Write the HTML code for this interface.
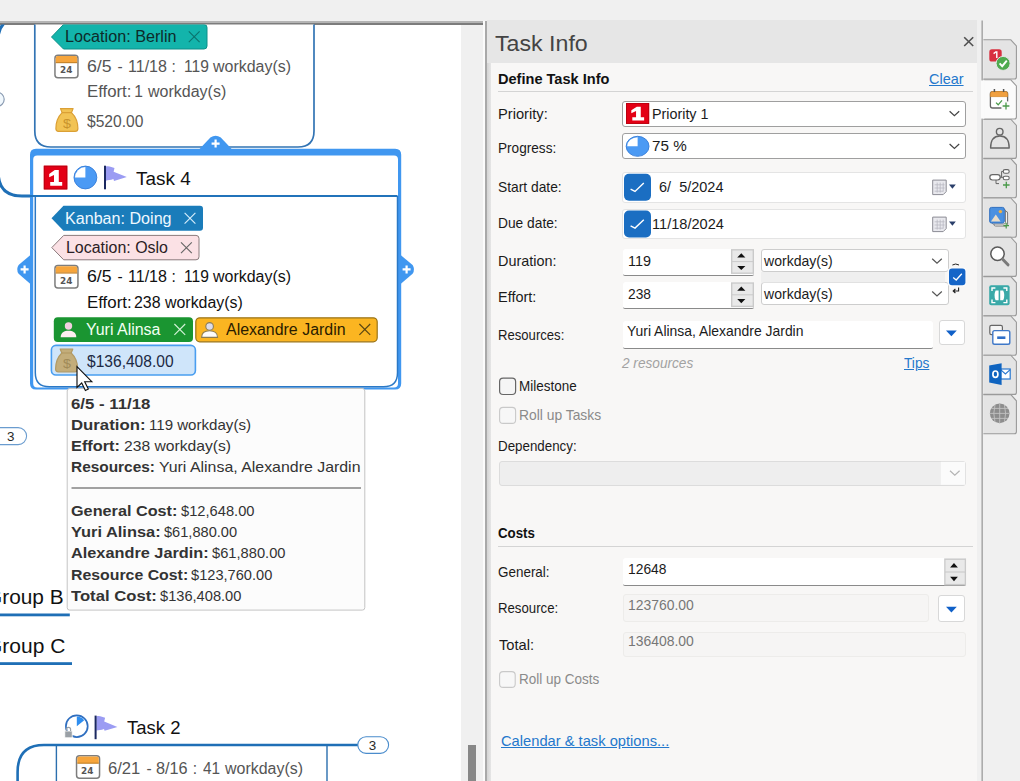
<!DOCTYPE html>
<html lang="en"><head><meta charset="utf-8"><title>Task Info</title>
<style>
html,body{margin:0;padding:0}
body{width:1020px;height:781px;overflow:hidden;position:relative;background:#f0f0f0;font-family:"Liberation Sans",sans-serif}
div{position:absolute;box-sizing:border-box}
#shapes{position:absolute;left:0;top:0}
#labels{left:0;top:0;width:1020px;height:781px}
.t{position:absolute;transform-origin:0 50%;white-space:pre;font-family:"Liberation Sans",sans-serif}
#canvas{left:0;top:24px;width:461px;height:757px;background:#fff}
#canvastop{left:0;top:21px;width:483px;height:3.5px;background:linear-gradient(#b4b4b4 0,#b4b4b4 40%,#7c7c7c 40%,#7c7c7c 100%)}
#vtrack{left:461px;top:24.5px;width:22px;height:757px;background:#f0f0f0}
#vthumb{left:467.6px;top:745.4px;width:8.9px;height:40px;background:#888}
#split1{left:482.5px;top:21px;width:2.7px;height:760px;background:#fbfbfb}
#split2{left:485.1px;top:21px;width:1.5px;height:760px;background:#a9a9a9}
#lborder{left:486.6px;top:62.5px;width:4.7px;height:719px;background:linear-gradient(90deg,#d4d4d4,#e6e6e6)}
#panel{left:486.5px;top:20px;width:490.5px;height:761px;background:#e6e6e6}
#panelbody{left:491.3px;top:62.5px;width:490.2px;height:719px;background:#f8f7f6}
#tabstrip{left:977px;top:20px;width:43px;height:761px;background:#f0f0f0}
.combo{background:#fff;border:1px solid #9f9f9f;border-radius:3px}
.field{background:#fff;border:1px solid #e4e4e4;border-radius:3px}
.wcombo{background:#fff;border:1px solid #cdcdcd;border-radius:3px}
.input{background:#fff;border-bottom:1.5px solid #8a8a8a;border-radius:3px 3px 2px 2px}
.dis{background:#f6f5f4;border:1px solid #edecea;border-radius:3px}
.btn{background:#fff;border:1px solid #d8d8d8;border-radius:3px}
.sep{height:1px;background:#d4d4d4}

</style></head>
<body>
<div id="canvas"></div>
<div id="vtrack"></div><div id="vthumb"></div>
<div id="canvastop"></div>
<div id="split1"></div><div id="split2"></div>
<div id="panel"></div>
<div id="panelbody"></div>
<div id="lborder"></div>
<div id="tabstrip"></div>
<div class="sep" style="left:498px;top:91.4px;width:475px"></div>
<div class="combo" style="left:622px;top:101px;width:344px;height:25.5px"></div>
<div class="combo" style="left:622px;top:133px;width:344px;height:25.5px"></div>
<div class="field" style="left:622px;top:172px;width:344px;height:30.5px"></div>
<div class="field" style="left:622px;top:209px;width:344px;height:30px"></div>
<div class="input" style="left:622.5px;top:249.2px;width:131px;height:26.6px"></div>
<div class="input" style="left:622.5px;top:282px;width:131px;height:26.8px"></div>
<div class="wcombo" style="left:761px;top:249.4px;width:187.5px;height:23px"></div>
<div class="wcombo" style="left:761px;top:282.4px;width:187.5px;height:22.4px"></div>
<div class="input" style="left:622.5px;top:320.8px;width:310px;height:28px"></div>
<div class="btn" style="left:938.6px;top:319.8px;width:26.4px;height:25.4px"></div>
<div class="dis" style="left:499px;top:460.6px;width:467px;height:25.4px;background:#eeeeee;border-color:#dcdcdc"></div>
<div class="sep" style="left:498px;top:545.6px;width:475px"></div>
<div class="input" style="left:622.5px;top:558px;width:343.5px;height:28.4px"></div>
<div class="dis" style="left:622.5px;top:594px;width:306.5px;height:27.6px"></div>
<div class="btn" style="left:938.4px;top:595px;width:26.6px;height:26.6px"></div>
<div class="dis" style="left:622.5px;top:631.6px;width:343.5px;height:25.4px"></div>

<svg id="shapes" width="1020" height="781" viewBox="0 0 1020 781">
<defs>
  <clipPath id="cv"><rect x="0" y="24.5" width="461" height="757"/></clipPath>
  <g id="cal">
    <rect x="0.75" y="0.75" width="23" height="22.5" rx="3" fill="#fff" stroke="#7d7d7d" stroke-width="1.5"/>
    <path d="M1.5 3.5 Q1.5 1.5 3.5 1.5 H21 Q23 1.5 23 3.5 V8 H1.5 Z" fill="#f6a53c"/>
    <rect x="1.5" y="7.6" width="21.5" height="1.2" fill="#c8852a"/>
  </g>
  <g id="bag">
    <path d="M5 0.6 H17.6 L16 4.6 C19.5 8 22.4 14 22.4 20.5 Q22.4 23.4 19.5 23.4 H3 Q0.4 23.4 0.4 20.5 C0.4 14 3.2 8 6.6 4.6 Z" stroke-width="1.2" stroke-linejoin="round"/>
    <path d="M6.3 4.6 H16.3" stroke-width="1.2" fill="none"/>
  </g>
  <g id="xmark"><path d="M0 0 L10.8 10.8 M10.8 0 L0 10.8" fill="none" stroke-width="1.15"/></g>
  <g id="person">
    <circle cx="7.8" cy="4" r="3.7" fill="#f1cfe0"/>
    <path d="M0 15.2 C0 10.6 3.6 8.8 7.8 8.8 C12 8.8 15.6 10.6 15.6 15.2 Z"/>
  </g>
  <g id="flag">
    <path d="M1.8 0.8 C5 -0.2 8 1.6 10.5 2.2 L9.6 6 L22.8 11.4 L10 15.2 L9.4 13.4 C6.5 14.6 4 14.4 1.8 15 Z" fill="#9b9cf3"/>
    <rect x="0" y="0" width="2" height="23.6" fill="#1b2960"/>
  </g>
  <g id="pie">
    <circle cx="12" cy="12" r="11.4" fill="#4b9af4" stroke="#3b82dc" stroke-width="1"/>
    <path d="M12 12 V1.6 A10.4 10.4 0 0 0 1.6 12 Z" fill="#fff"/>
  </g>
  <g id="prio">
    <rect x="0" y="0" width="23.5" height="23.7" fill="#e30016"/>
    <rect x="0.5" y="0.5" width="22.5" height="22.7" fill="none" stroke="#b90010" stroke-width="1"/>
    <path d="M5.4 8.2 L11 4.3 H15 V16.2 H18.4 V20 H6.4 V16.2 H10.2 V9.2 L5.4 11.6 Z" fill="#fff"/>
  </g>
  <g id="plus"><path d="M-4 0 H4 M0 -4 V4" stroke="#fff" stroke-width="2.2" fill="none"/></g>
</defs>
<g clip-path="url(#cv)">
  <!-- parent connector bracket at far left -->
  <path d="M6 21 C2.4 24.4 -1.8 29 -1.8 38 V172 Q-1.6 196 22 196 H31" fill="none" stroke="#1f6fb6" stroke-width="3"/>
  <circle cx="-2.8" cy="99.3" r="7" fill="#f1f8fd" stroke="#8a9bb2" stroke-width="1.2"/>
  <!-- first task box -->
  <path d="M34.8 20 V131 Q34.8 147 50.8 147 H298 Q314 147 314 131 V20" fill="#fff" stroke="#3274b4" stroke-width="1.7"/>
  <!-- Location: Berlin tag -->
  <path d="M51.5 37 L63.5 24.5 H204 Q207 24.5 207 27.5 V46 Q207 49 204 49 H63.5 Z" fill="#13b4ab" stroke="#0e8f88" stroke-width="1"/>
  <use href="#xmark" x="188.8" y="31.4" stroke="#0b746e"/>
  <use href="#cal" x="54.2" y="54.4"/>
  <use href="#bag" x="55.5" y="108" fill="#f2c354" stroke="#dba035"/>
  <!-- top handle -->
  <path d="M198.6 150 L210.4 137.4 Q215.6 134 220.8 137.4 L232.6 150 Z" fill="#4097f0"/>
  <use href="#plus" x="215.6" y="143.6"/>
  <!-- selection frame + topic Task 4 -->
  <rect x="31" y="150" width="369" height="238" rx="5" fill="#fff"/>
  <path d="M36 148.8 H395.2 Q401.2 148.8 401.2 154.8 V383.4 Q401.2 389.4 395.2 389.4 H36 Q30 389.4 30 383.4 V154.8 Q30 148.8 36 148.8 Z M37.2 155.6 H394 Q398 155.6 398 159.6 V383.6 Q398 387.6 394 387.6 H37.2 Q33.2 387.6 33.2 383.6 V159.6 Q33.2 155.6 37.2 155.6 Z" fill="#4097f0" fill-rule="evenodd"/>
  <path d="M35.3 196 V372.8 Q35.3 386.8 49.3 386.8 H383.5 Q397.5 386.8 397.5 372.8 V196" fill="none" stroke="#2a78c6" stroke-width="1.5"/>
  <path d="M20 196 H397.5" fill="none" stroke="#2173ba" stroke-width="2.2"/>
  <!-- side handles -->
  <path d="M31 254.6 L18.6 265 Q15.8 269.4 18.6 273.8 L31 284.4 Z" fill="#4097f0"/>
  <use href="#plus" x="24.6" y="269.4"/>
  <path d="M400 254.6 L412.6 265 Q415.4 269.4 412.6 273.8 L400 284.4 Z" fill="#4097f0"/>
  <use href="#plus" x="406.6" y="269.4"/>
  <!-- title icons -->
  <use href="#prio" x="43.8" y="165.7"/>
  <use href="#pie" x="73.4" y="165.5"/>
  <use href="#flag" x="104" y="165.7"/>
  <!-- Kanban: Doing -->
  <path d="M51.5 218.2 L63.5 205.8 H200 Q203 205.8 203 208.8 V227.8 Q203 230.8 200 230.8 H63.5 Z" fill="#1a7cba"/>
  <use href="#xmark" x="184.6" y="212.8" stroke="#d4ecfa"/>
  <!-- Location: Oslo -->
  <path d="M51.8 247.6 L63.7 235.4 H196 Q199 235.4 199 238.4 V256.8 Q199 259.8 196 259.8 H63.7 Z" fill="#fbe1e5" stroke="#8a7a7c" stroke-width="1"/>
  <use href="#xmark" x="181" y="242.3" stroke="#666"/>
  <use href="#cal" x="54.2" y="264.8"/>
  <!-- resource tags -->
  <rect x="53.8" y="317.3" width="139.2" height="24.6" rx="4" fill="#1a9531"/>
  <use href="#person" x="60.7" y="322" fill="#fdeef0"/>
  <use href="#xmark" x="174.4" y="324" stroke="#d2f2d6"/>
  <rect x="195.8" y="317.8" width="181.4" height="24" rx="4" fill="#fbb521" stroke="#9a7418" stroke-width="1.2"/>
  <g transform="translate(201.2 321.8)"><circle cx="8.4" cy="4.6" r="3.8" fill="#dcdcea" stroke="#8c7c52" stroke-width="1.1"/><path d="M0.4 15.6 C0.4 11.2 3.8 9 8.4 9 C13 9 16.4 11.2 16.4 15.6 Z" fill="#fdfbfb" stroke="#8c7c52" stroke-width="1.1"/></g>
  <use href="#xmark" x="359.4" y="324" stroke="#5a4612"/>
  <!-- selected cost -->
  <rect x="51.4" y="345.4" width="144" height="29.6" rx="4.5" fill="#cfe5fa" stroke="#4a9ef0" stroke-width="1.6"/>
  <use href="#bag" x="55.2" y="348.4" fill="#c3ad7a" stroke="#b29a64"/>
  <!-- "3" bubble left -->
  <rect x="-8" y="427.6" width="34.6" height="17" rx="8.5" fill="#fff" stroke="#6a9ccf" stroke-width="1.1"/>
  <!-- groups -->
  <rect x="-2" y="613.5" width="71.8" height="2.8" fill="#1f6fb6"/>
  <rect x="-2" y="662.2" width="74" height="2.8" fill="#1f6fb6"/>
  <!-- Task 2 -->
  <path d="M17.6 790 V772 Q17.6 745 44 745 H358" fill="none" stroke="#1f6fb6" stroke-width="2.6"/>
  <path d="M56.4 745.4 V790 M327 745.4 V790" fill="none" stroke="#2b6fae" stroke-width="1.4"/>
  <rect x="357.8" y="736.8" width="30.8" height="16.6" rx="8.3" fill="#fff" stroke="#4a8ccc" stroke-width="1.1"/>
  <use href="#cal" x="75.8" y="755"/>
  <use href="#flag" x="94.6" y="715.6"/>
  <!-- pie with lock (Task 2) -->
  <circle cx="76.8" cy="726.2" r="10.9" fill="#fff" stroke="#2f6fc0" stroke-width="1.7"/>
  <path d="M76.8 726.2 V716.6 A9.6 9.6 0 0 1 84.2 720.2 Z" fill="#2e8ef0"/>
  <rect x="64.8" y="731" width="7.4" height="6.8" fill="#9aa0a6" stroke="#fff" stroke-width="0.8"/>
  <path d="M66.4 731 V729.4 A2.1 2.1 0 0 1 70.6 729.4 V731" fill="none" stroke="#9aa0a6" stroke-width="1.2"/>
  <!-- tooltip -->
  <rect x="67.2" y="388.5" width="297.6" height="221.6" rx="2.5" fill="#fcfcfc" stroke="#c4c4c4" stroke-width="1"/>
  <rect x="71.5" y="487.4" width="289.5" height="1.2" fill="#666"/>
  <!-- cursor -->
  <path d="M77 366.7 V387.4 L81.7 383 L85.4 390.4 L88.3 389 L84.7 381.7 H91.8 Z" fill="#fff" stroke="#111" stroke-width="1.15" stroke-linejoin="miter"/>
</g>
<!-- 24 labels are real text below -->
<!-- ================= PANEL ================= -->
<defs>
  <g id="chev"><path d="M0 0 L4.8 4.5 L9.6 0" fill="none" stroke-width="1.2"/></g>
  <g id="spin">
    <rect x="0" y="0" width="23" height="24.8" fill="#cacaca"/>
    <rect x="1.4" y="1.4" width="20.2" height="10.6" fill="#e9e9e9"/>
    <rect x="1.4" y="13" width="20.2" height="10.4" fill="#e9e9e9"/>
    <path d="M6.2 8.4 L10.3 4.2 L14.4 8.4 Z M6.2 16.8 L10.3 21 L14.4 16.8 Z" fill="#111"/>
  </g>
  <g id="calmini">
    <path d="M0.5 0.5 H14 V12 L11 15 H0.5 Z" fill="#e9e9ee" stroke="#8c8c94" stroke-width="1"/>
    <path d="M2.4 5.2 H12.4 M2.4 8.4 H12.4 M2.4 11.6 H11 M5 3 V13 M8 3 V13 M11 3 V12" stroke="#b9b9c2" stroke-width="0.8" fill="none"/>
    <path d="M16.8 5 H23.6 L20.2 9.2 Z" fill="#2a3f6a"/>
  </g>
  <g id="cbx">
    <rect x="0" y="0" width="27" height="27" rx="5" fill="#1b6ec2"/>
    <path d="M6.6 15.4 L11 17.6 L19.8 9.2" fill="none" stroke="#fff" stroke-width="1.4"/>
  </g>
  <g id="tab">
    <path d="M0 0 H27.4 L33 6.2 V37.2 Q33 39.2 31 39.2 H0" stroke="#9a9a9a" stroke-width="1.1"/>
  </g>
</defs>
<!-- close x -->
<path d="M964.2 37.2 L973.2 46 M973.2 37.2 L964.2 46" stroke="#505050" stroke-width="1.6" fill="none"/>
<!-- priority combo content -->
<use href="#prio" transform="translate(626 103) scale(0.985 0.88)"/>
<use href="#chev" x="949.6" y="111.3" stroke="#444"/>
<ellipse cx="637.6" cy="146.3" rx="11.4" ry="10" fill="#4b9af4" stroke="#3b82dc" stroke-width="1"/>
<path d="M637.6 146.3 V137.2 A10.4 9.1 0 0 0 627.2 146.3 Z" fill="#fff"/>
<use href="#chev" x="949.6" y="144" stroke="#444"/>
<!-- date fields -->
<use href="#cbx" x="624" y="173.8"/>
<use href="#cbx" x="624" y="210.5"/>
<use href="#calmini" x="932.2" y="179.6"/>
<use href="#calmini" x="932.2" y="216.6"/>
<!-- duration/effort -->
<use href="#spin" x="731" y="249.1"/>
<use href="#spin" x="731" y="282.3"/>
<rect x="761" y="272" width="184" height="10.6" fill="#efefef"/>
<use href="#chev" x="932.2" y="258.8" stroke="#555"/>
<use href="#chev" x="932.2" y="291.5" stroke="#555"/>
<rect x="947.6" y="267.4" width="19" height="19" rx="4" fill="#fbfbfb"/>
<rect x="949" y="268.6" width="16.4" height="16.6" rx="3" fill="#1565c8"/>
<path d="M953.2 277.6 L956.2 280 L961.8 273.8" fill="none" stroke="#fff" stroke-width="1.3"/>
<path d="M952.4 265 Q955.6 263 959 265" fill="none" stroke="#222" stroke-width="1"/>
<path d="M958.6 287.4 V291 H953.4 M955.4 289 L953.2 291 L955.4 293" fill="none" stroke="#222" stroke-width="1.1"/>
<!-- resources dropdown -->
<path d="M946 330.4 H956.8 L951.4 336.2 Z" fill="#1060c8"/>
<!-- checkboxes -->
<rect x="499.6" y="378.1" width="16" height="16.4" rx="3.5" fill="#f5f5f5" stroke="#666" stroke-width="1.2"/>
<rect x="499.6" y="407.4" width="16" height="16" rx="3.5" fill="#f7f7f7" stroke="#c9c9c9" stroke-width="1.1"/>
<rect x="499.6" y="671.6" width="15.6" height="15.8" rx="3.5" fill="#f7f7f7" stroke="#c9c9c9" stroke-width="1.1"/>
<!-- dependency combo chevron -->
<rect x="940.8" y="461.8" width="24.4" height="23" fill="#fbfbfb"/>
<use href="#chev" x="950" y="470.8" stroke="#b4b4b4"/>
<!-- costs -->
<use href="#spin" transform="translate(944.2 558.4) scale(0.95 1.09)"/>
<path d="M946 606.8 H956.8 L951.4 612.6 Z" fill="#1060c8"/>
<!-- ================= TAB STRIP ================= -->
<g fill="#e4e4e4">
  <use href="#tab" x="983.4" y="39.8"/>
  <use href="#tab" x="983.4" y="119.2"/>
  <use href="#tab" x="983.4" y="158.6"/>
  <use href="#tab" x="983.4" y="198"/>
  <use href="#tab" x="983.4" y="237.2"/>
  <use href="#tab" x="983.4" y="276.6"/>
  <use href="#tab" x="983.4" y="316"/>
  <use href="#tab" x="983.4" y="355.2"/>
  <use href="#tab" x="983.4" y="394.6"/>
</g>
<rect x="981.5" y="20.5" width="1.3" height="761" fill="#9c9c9c"/>
<g fill="#fbfbfb"><use href="#tab" x="983.4" y="79.8"/></g>
<rect x="981" y="80.4" width="3.4" height="38.2" fill="#fbfbfb"/>
<!-- icon 1: priority/check -->
<rect x="989.3" y="49.3" width="12.4" height="12.2" rx="2.6" fill="#d8303f"/>
<path d="M993.6 53.6 L995.8 52 H996.8 V58" stroke="#fff" stroke-width="1.4" fill="none"/>
<circle cx="1003.1" cy="63.4" r="7" fill="#4faa4f" stroke="#e4e4e4" stroke-width="1"/>
<path d="M999.6 63.4 L1002.2 66.2 L1006.8 60.6" fill="none" stroke="#fff" stroke-width="1.9"/>
<!-- icon 2: calendar -->
<rect x="990.4" y="91.6" width="17.2" height="16.4" rx="2.2" fill="#fff" stroke="#666" stroke-width="1.3"/>
<path d="M990.4 96.6 V93.8 Q990.4 91.6 992.6 91.6 H1005.4 Q1007.6 91.6 1007.6 93.8 V96.6 Z" fill="#f0a040" stroke="#d88a2a" stroke-width="0.8"/>
<path d="M994.4 89 V92 M1003.6 89 V92" stroke="#555" stroke-width="1.5"/>
<rect x="1001.4" y="101.4" width="8.6" height="8.6" fill="#fbfbfb"/>
<path d="M996 102.6 L998.2 104.8 L1002 100.4" fill="none" stroke="#4a9a4a" stroke-width="1.3"/>
<path d="M1002.6 106 H1009.4 M1006 102.6 V109.4" stroke="#4a9a4a" stroke-width="1.3"/>
<!-- icon 3: person -->
<circle cx="999.7" cy="131.7" r="3.3" fill="none" stroke="#666" stroke-width="1.4"/>
<path d="M990.6 148 Q990.6 136 999.9 136 Q1009.2 136 1009.2 148 Z" fill="none" stroke="#666" stroke-width="1.4" stroke-linejoin="round"/>
<!-- icon 4: map -->
<rect x="989.8" y="174.6" width="10.4" height="5.4" rx="2.7" fill="#fff" stroke="#666" stroke-width="1.2"/>
<rect x="1003.2" y="169.6" width="6" height="3.6" rx="1.8" fill="#fff" stroke="#666" stroke-width="1.1"/>
<rect x="1003.2" y="176.2" width="6" height="3.6" rx="1.8" fill="#fff" stroke="#666" stroke-width="1.1"/>
<path d="M1000.2 177.3 H1003.2 M1001.6 177.3 V171.4 H1003.2 M996 180 V183.6 H999" fill="none" stroke="#666" stroke-width="1"/>
<path d="M1003 185 H1009.6 M1006.3 181.7 V188.3" stroke="#4a9a4a" stroke-width="1.3"/>
<!-- icon 5: image -->
<rect x="994" y="211.4" width="13.6" height="14.6" rx="1.6" fill="#fff" stroke="#777" stroke-width="1"/>
<rect x="992" y="209.4" width="13.6" height="14.6" rx="1.6" fill="#fff" stroke="#777" stroke-width="1"/>
<rect x="989.7" y="207.4" width="14.6" height="15.6" rx="1.8" fill="#4a90e0" stroke="#2f6fc0" stroke-width="1"/>
<circle cx="1000.4" cy="211.6" r="1.7" fill="#f0b040"/>
<path d="M991 221.6 L995.8 214.6 L1000.6 221.6 Z" fill="#e8dcc8"/>
<path d="M1003.4 225.6 H1009 M1006.2 222.8 V228.4" stroke="#4a9a4a" stroke-width="1.2"/>
<!-- icon 6: search -->
<circle cx="997.5" cy="253.7" r="6.7" fill="#fff" stroke="#5a5a5a" stroke-width="1.5"/>
<path d="M1002.4 259 L1008 264.8" stroke="#7a7a7a" stroke-width="3" stroke-linecap="round"/>
<!-- icon 7: focus -->
<rect x="989.2" y="285.3" width="20.4" height="20" rx="2" fill="#3aa9a8"/>
<path d="M992 291 V288 H995.4 M1003.4 288 H1006.8 V291 M1006.8 299.6 V302.6 H1003.4 M995.4 302.6 H992 V299.6" fill="none" stroke="#fff" stroke-width="1.4"/>
<path d="M998.6 290.4 H995.6 Q993.4 295.3 995.6 300.2 H998.6 Z M1000.2 290.4 H1003.2 Q1005.4 295.3 1003.2 300.2 H1000.2 Z" fill="#fff"/>
<!-- icon 8: windows -->
<rect x="989.8" y="325.4" width="12.6" height="9.2" rx="1.6" fill="#f4f4f4" stroke="#666" stroke-width="1.2"/>
<rect x="992.8" y="330.6" width="17" height="13.6" rx="1.8" fill="#fff" stroke="#3f78c8" stroke-width="1.4"/>
<rect x="997.2" y="336.4" width="8.2" height="2.6" fill="#2f6fc8"/>
<!-- icon 9: outlook -->
<rect x="1000.6" y="369" width="9.6" height="10" fill="#fff" stroke="#2a78d0" stroke-width="1.2"/>
<path d="M1000.6 369.6 L1005.4 374 L1010.2 369.6" fill="none" stroke="#2a78d0" stroke-width="1.1"/>
<path d="M989.2 365.4 L1001.6 363.2 V385 L989.2 382.6 Z" fill="#0f64c0"/>
<ellipse cx="995.4" cy="374.2" rx="2.5" ry="3.2" fill="none" stroke="#fff" stroke-width="1.7"/>
<!-- icon 10: globe -->
<circle cx="999.7" cy="413.4" r="9.8" fill="#8d8d8d"/>
<path d="M990 413.4 H1009.4 M991.4 408.4 H1008 M991.4 418.4 H1008 M999.7 403.6 V423.2 M995 404.8 Q992.6 413.4 995 422 M1004.4 404.8 Q1006.8 413.4 1004.4 422" fill="none" stroke="#c2c2c2" stroke-width="0.9"/>

</svg>
<div id="labels">
<span class="t" id="t0" style="left:65.22px;top:29.09px;font-size:15.6px;line-height:15.6px;color:#0d2b2a;transform:scaleX(1.0378);">Location: Berlin</span>
<span class="t" id="t1" style="left:86.72px;top:59.09px;font-size:15.6px;line-height:15.6px;color:#555;transform:scaleX(1.1371);">6/5</span>
<span class="t" id="t2" style="left:120.20px;top:59.09px;font-size:15.6px;line-height:15.6px;color:#555;transform:translateX(-50%);">-</span>
<span class="t" id="t3" style="left:127.92px;top:59.09px;font-size:15.6px;line-height:15.6px;color:#555;transform:scaleX(1.0286);">11/18</span>
<span class="t" id="t4" style="left:173.65px;top:59.09px;font-size:15.6px;line-height:15.6px;color:#555;transform:translateX(-50%);">:</span>
<span class="t" id="t5" style="left:183.62px;top:59.09px;font-size:15.6px;line-height:15.6px;color:#555;transform:scaleX(0.9994);">119</span>
<span class="t" id="t6" style="left:213.12px;top:59.09px;font-size:15.6px;line-height:15.6px;color:#555;transform:scaleX(1.0237);">workday(s)</span>
<span class="t" id="t7" style="left:86.72px;top:84.09px;font-size:15.6px;line-height:15.6px;color:#555;transform:scaleX(1.0758);">Effort:</span>
<span class="t" id="t8" style="left:138.70px;top:84.09px;font-size:15.6px;line-height:15.6px;color:#555;transform:translateX(-50%);">1</span>
<span class="t" id="t9" style="left:147.72px;top:84.09px;font-size:15.6px;line-height:15.6px;color:#555;transform:scaleX(1.0264);">workday(s)</span>
<span class="t" id="t10" style="left:87.42px;top:114.09px;font-size:15.6px;line-height:15.6px;color:#555;transform:scaleX(0.9997);">$520.00</span>
<span class="t" id="t11" style="left:135.56px;top:170.39px;font-size:18.8px;line-height:18.8px;color:#111;transform:scaleX(1.0073);">Task 4</span>
<span class="t" id="t12" style="left:65.22px;top:211.09px;font-size:15.6px;line-height:15.6px;color:#eef8ff;transform:scaleX(1.0328);">Kanban: Doing</span>
<span class="t" id="t13" style="left:66.12px;top:240.09px;font-size:15.6px;line-height:15.6px;color:#2a2024;transform:scaleX(1.0228);">Location: Oslo</span>
<span class="t" id="t14" style="left:86.72px;top:269.09px;font-size:15.6px;line-height:15.6px;color:#111;transform:scaleX(1.1371);">6/5</span>
<span class="t" id="t15" style="left:120.20px;top:269.09px;font-size:15.6px;line-height:15.6px;color:#111;transform:translateX(-50%);">-</span>
<span class="t" id="t16" style="left:127.92px;top:269.09px;font-size:15.6px;line-height:15.6px;color:#111;transform:scaleX(1.0286);">11/18</span>
<span class="t" id="t17" style="left:173.65px;top:269.09px;font-size:15.6px;line-height:15.6px;color:#111;transform:translateX(-50%);">:</span>
<span class="t" id="t18" style="left:183.62px;top:269.09px;font-size:15.6px;line-height:15.6px;color:#111;transform:scaleX(0.9994);">119</span>
<span class="t" id="t19" style="left:213.12px;top:269.09px;font-size:15.6px;line-height:15.6px;color:#111;transform:scaleX(1.0237);">workday(s)</span>
<span class="t" id="t20" style="left:86.72px;top:295.09px;font-size:15.6px;line-height:15.6px;color:#111;transform:scaleX(1.0806);">Effort:</span>
<span class="t" id="t21" style="left:134.12px;top:295.09px;font-size:15.6px;line-height:15.6px;color:#111;transform:scaleX(1.0203);">238</span>
<span class="t" id="t22" style="left:165.32px;top:295.09px;font-size:15.6px;line-height:15.6px;color:#111;transform:scaleX(1.0211);">workday(s)</span>
<span class="t" id="t23" style="left:86.12px;top:322.09px;font-size:15.6px;line-height:15.6px;color:#f2fff2;transform:scaleX(1.0224);">Yuri Alinsa</span>
<span class="t" id="t24" style="left:226.22px;top:322.09px;font-size:15.6px;line-height:15.6px;color:#2a1c00;transform:scaleX(1.0216);">Alexandre Jardin</span>
<span class="t" id="t25" style="left:87.22px;top:354.09px;font-size:15.6px;line-height:15.6px;color:#1c2a44;transform:scaleX(0.9982);">$136,408.00</span>
<span class="t" id="t26" style="left:6.93px;top:429.96px;font-size:13.4px;line-height:13.4px;color:#2a2a2a;">3</span>
<span class="t" id="t27" style="left:59.52px;top:65.26px;font-size:9.5px;line-height:9.5px;color:#555;font-weight:700;transform:scaleX(0.9332);font-family:'DejaVu Sans','Liberation Sans',sans-serif;">24</span>
<span class="t" id="t28" style="left:59.52px;top:276.26px;font-size:9.5px;line-height:9.5px;color:#555;font-weight:700;transform:scaleX(0.9332);font-family:'DejaVu Sans','Liberation Sans',sans-serif;">24</span>
<span class="t" id="t29" style="left:81.12px;top:766.26px;font-size:9.5px;line-height:9.5px;color:#555;font-weight:700;transform:scaleX(0.9332);font-family:'DejaVu Sans','Liberation Sans',sans-serif;">24</span>
<span class="t" id="t30" style="left:62.93px;top:116.87px;font-size:13.5px;line-height:13.5px;color:#c9932c;transform:scaleX(1.0578);">$</span>
<span class="t" id="t31" style="left:62.62px;top:356.87px;font-size:13.5px;line-height:13.5px;color:#a08a58;transform:scaleX(1.0578);">$</span>
<span class="t" id="t32" style="left:71.26px;top:396.77px;font-size:14.8px;line-height:14.8px;color:#333;font-weight:700;transform:scaleX(1.1364);">6/5 - 11/18</span>
<span class="t" id="t33" style="left:71.26px;top:417.77px;font-size:14.8px;line-height:14.8px;color:#333;font-weight:700;transform:scaleX(1.1325);">Duration:</span>
<span class="t" id="t34" style="left:149.26px;top:417.77px;font-size:14.8px;line-height:14.8px;color:#333;transform:scaleX(1.0192);">119 workday(s)</span>
<span class="t" id="t35" style="left:71.26px;top:438.77px;font-size:14.8px;line-height:14.8px;color:#333;font-weight:700;transform:scaleX(1.1034);">Effort:</span>
<span class="t" id="t36" style="left:123.76px;top:438.77px;font-size:14.8px;line-height:14.8px;color:#333;transform:scaleX(1.0576);">238 workday(s)</span>
<span class="t" id="t37" style="left:71.26px;top:459.77px;font-size:14.8px;line-height:14.8px;color:#333;font-weight:700;transform:scaleX(1.0418);">Resources:</span>
<span class="t" id="t38" style="left:159.26px;top:459.77px;font-size:14.8px;line-height:14.8px;color:#333;transform:scaleX(1.0743);">Yuri Alinsa, Alexandre Jardin</span>
<span class="t" id="t39" style="left:70.86px;top:503.77px;font-size:14.8px;line-height:14.8px;color:#333;font-weight:700;transform:scaleX(1.0963);">General Cost:</span>
<span class="t" id="t40" style="left:180.66px;top:503.77px;font-size:14.8px;line-height:14.8px;color:#333;transform:scaleX(0.9921);">$12,648.00</span>
<span class="t" id="t41" style="left:70.86px;top:524.77px;font-size:14.8px;line-height:14.8px;color:#333;font-weight:700;transform:scaleX(1.1091);">Yuri Alinsa:</span>
<span class="t" id="t42" style="left:163.96px;top:524.77px;font-size:14.8px;line-height:14.8px;color:#333;transform:scaleX(0.9867);">$61,880.00</span>
<span class="t" id="t43" style="left:70.86px;top:545.77px;font-size:14.8px;line-height:14.8px;color:#333;font-weight:700;transform:scaleX(1.1014);">Alexandre Jardin:</span>
<span class="t" id="t44" style="left:211.56px;top:545.77px;font-size:14.8px;line-height:14.8px;color:#333;transform:scaleX(0.9921);">$61,880.00</span>
<span class="t" id="t45" style="left:70.86px;top:567.77px;font-size:14.8px;line-height:14.8px;color:#333;font-weight:700;transform:scaleX(1.0715);">Resource Cost:</span>
<span class="t" id="t46" style="left:191.46px;top:567.77px;font-size:14.8px;line-height:14.8px;color:#333;transform:scaleX(0.9876);">$123,760.00</span>
<span class="t" id="t47" style="left:70.86px;top:588.77px;font-size:14.8px;line-height:14.8px;color:#333;font-weight:700;transform:scaleX(1.1261);">Total Cost:</span>
<span class="t" id="t48" style="left:160.06px;top:588.77px;font-size:14.8px;line-height:14.8px;color:#333;transform:scaleX(0.9889);">$136,408.00</span>
<span class="t" id="t49" style="left:-13.60px;top:587.37px;font-size:20px;line-height:20px;color:#111;transform:scaleX(1.0418);">Group B</span>
<span class="t" id="t50" style="left:-13.60px;top:636.37px;font-size:20px;line-height:20px;color:#111;transform:scaleX(1.0490);">Group C</span>
<span class="t" id="t51" style="left:127.45px;top:718.22px;font-size:19px;line-height:19px;color:#111;transform:scaleX(0.9741);">Task 2</span>
<span class="t" id="t52" style="left:368.73px;top:738.96px;font-size:13.4px;line-height:13.4px;color:#2a2a2a;">3</span>
<span class="t" id="t53" style="left:107.92px;top:761.09px;font-size:15.6px;line-height:15.6px;color:#555;transform:scaleX(1.0659);">6/21</span>
<span class="t" id="t54" style="left:149.10px;top:761.09px;font-size:15.6px;line-height:15.6px;color:#555;transform:translateX(-50%);">-</span>
<span class="t" id="t55" style="left:156.42px;top:761.09px;font-size:15.6px;line-height:15.6px;color:#555;transform:scaleX(1.0428);">8/16</span>
<span class="t" id="t56" style="left:194.85px;top:761.09px;font-size:15.6px;line-height:15.6px;color:#555;transform:translateX(-50%);">:</span>
<span class="t" id="t57" style="left:203.22px;top:761.09px;font-size:15.6px;line-height:15.6px;color:#555;transform:scaleX(0.9828);">41</span>
<span class="t" id="t58" style="left:225.42px;top:761.09px;font-size:15.6px;line-height:15.6px;color:#555;transform:scaleX(1.0237);">workday(s)</span>
<span class="t" id="t59" style="left:494.87px;top:33.17px;font-size:22.6px;line-height:22.6px;color:#444;transform:scaleX(1.0259);">Task Info</span>
<span class="t" id="t60" style="left:498.29px;top:72.28px;font-size:14.2px;line-height:14.2px;color:#111;font-weight:700;transform:scaleX(1.0266);">Define Task Info</span>
<span class="t" id="t61" style="left:929.07px;top:71.94px;font-size:14.6px;line-height:14.6px;color:#2478cc;transform:scaleX(0.9910);text-decoration:underline;">Clear</span>
<span class="t" id="t62" style="left:498.02px;top:106.94px;font-size:14.6px;line-height:14.6px;color:#1b1b1b;transform:scaleX(1.0049);">Priority:</span>
<span class="t" id="t63" style="left:651.77px;top:106.94px;font-size:14.6px;line-height:14.6px;color:#1b1b1b;transform:scaleX(0.9806);">Priority 1</span>
<span class="t" id="t64" style="left:498.02px;top:140.94px;font-size:14.6px;line-height:14.6px;color:#1b1b1b;transform:scaleX(0.9321);">Progress:</span>
<span class="t" id="t65" style="left:651.77px;top:138.94px;font-size:14.6px;line-height:14.6px;color:#1b1b1b;transform:scaleX(1.0434);">75 %</span>
<span class="t" id="t66" style="left:498.02px;top:179.94px;font-size:14.6px;line-height:14.6px;color:#1b1b1b;transform:scaleX(0.9460);">Start date:</span>
<span class="t" id="t67" style="left:659.27px;top:179.94px;font-size:14.6px;line-height:14.6px;color:#1b1b1b;transform:scaleX(0.9929);">6/  5/2024</span>
<span class="t" id="t68" style="left:498.02px;top:215.94px;font-size:14.6px;line-height:14.6px;color:#1b1b1b;transform:scaleX(0.9433);">Due date:</span>
<span class="t" id="t69" style="left:651.77px;top:216.94px;font-size:14.6px;line-height:14.6px;color:#1b1b1b;transform:scaleX(0.9999);">11/18/2024</span>
<span class="t" id="t70" style="left:498.02px;top:253.94px;font-size:14.6px;line-height:14.6px;color:#1b1b1b;transform:scaleX(0.9863);">Duration:</span>
<span class="t" id="t71" style="left:628.27px;top:253.94px;font-size:14.6px;line-height:14.6px;color:#1b1b1b;transform:scaleX(0.9869);">119</span>
<span class="t" id="t72" style="left:764.07px;top:253.94px;font-size:14.6px;line-height:14.6px;color:#1b1b1b;transform:scaleX(0.9622);">workday(s)</span>
<span class="t" id="t73" style="left:498.02px;top:289.94px;font-size:14.6px;line-height:14.6px;color:#1b1b1b;transform:scaleX(0.9906);">Effort:</span>
<span class="t" id="t74" style="left:628.27px;top:286.94px;font-size:14.6px;line-height:14.6px;color:#1b1b1b;transform:scaleX(0.9426);">238</span>
<span class="t" id="t75" style="left:764.07px;top:286.94px;font-size:14.6px;line-height:14.6px;color:#1b1b1b;transform:scaleX(0.9622);">workday(s)</span>
<span class="t" id="t76" style="left:498.02px;top:327.94px;font-size:14.6px;line-height:14.6px;color:#1b1b1b;transform:scaleX(0.8984);">Resources:</span>
<span class="t" id="t77" style="left:627.27px;top:323.94px;font-size:14.6px;line-height:14.6px;color:#1b1b1b;transform:scaleX(0.9540);">Yuri Alinsa, Alexandre Jardin</span>
<span class="t" id="t78" style="left:621.97px;top:355.94px;font-size:14.6px;line-height:14.6px;color:#a2a2a2;font-style:italic;transform:scaleX(0.9346);">2 resources</span>
<span class="t" id="t79" style="left:903.67px;top:355.94px;font-size:14.6px;line-height:14.6px;color:#2478cc;transform:scaleX(0.9382);text-decoration:underline;">Tips</span>
<span class="t" id="t80" style="left:518.67px;top:378.94px;font-size:14.6px;line-height:14.6px;color:#1b1b1b;transform:scaleX(0.9230);">Milestone</span>
<span class="t" id="t81" style="left:518.77px;top:407.94px;font-size:14.6px;line-height:14.6px;color:#8a8a8a;transform:scaleX(0.9495);">Roll up Tasks</span>
<span class="t" id="t82" style="left:498.27px;top:438.94px;font-size:14.6px;line-height:14.6px;color:#1b1b1b;transform:scaleX(0.9145);">Dependency:</span>
<span class="t" id="t83" style="left:497.79px;top:526.28px;font-size:14.2px;line-height:14.2px;color:#111;font-weight:700;transform:scaleX(0.9365);">Costs</span>
<span class="t" id="t84" style="left:498.37px;top:564.94px;font-size:14.6px;line-height:14.6px;color:#1b1b1b;transform:scaleX(0.9210);">General:</span>
<span class="t" id="t85" style="left:628.17px;top:561.94px;font-size:14.6px;line-height:14.6px;color:#1b1b1b;transform:scaleX(0.9474);">12648</span>
<span class="t" id="t86" style="left:498.37px;top:600.94px;font-size:14.6px;line-height:14.6px;color:#1b1b1b;transform:scaleX(0.9044);">Resource:</span>
<span class="t" id="t87" style="left:628.17px;top:597.94px;font-size:14.6px;line-height:14.6px;color:#777;transform:scaleX(0.9545);">123760.00</span>
<span class="t" id="t88" style="left:499.27px;top:637.94px;font-size:14.6px;line-height:14.6px;color:#1b1b1b;transform:scaleX(1.0077);">Total:</span>
<span class="t" id="t89" style="left:628.17px;top:633.94px;font-size:14.6px;line-height:14.6px;color:#777;transform:scaleX(0.9545);">136408.00</span>
<span class="t" id="t90" style="left:518.97px;top:671.94px;font-size:14.6px;line-height:14.6px;color:#8a8a8a;transform:scaleX(0.9258);">Roll up Costs</span>
<span class="t" id="t91" style="left:501.07px;top:733.94px;font-size:14.6px;line-height:14.6px;color:#2478cc;transform:scaleX(1.0069);text-decoration:underline;">Calendar &amp; task options...</span>
</div>
</body></html>
